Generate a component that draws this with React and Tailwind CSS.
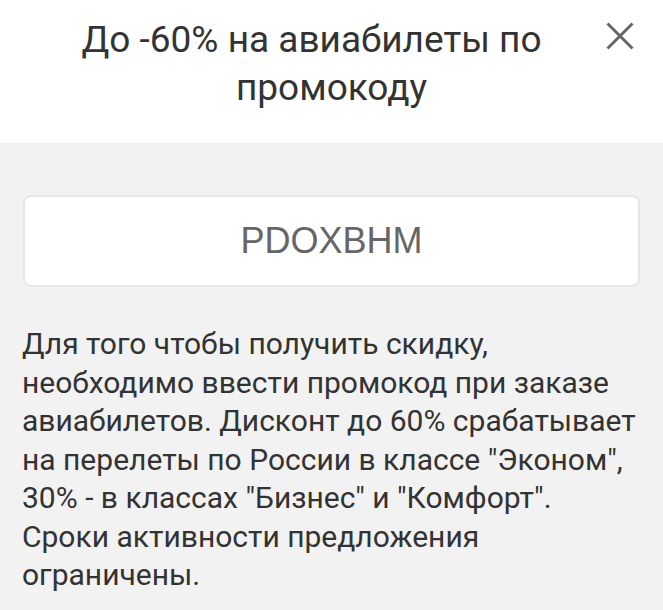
import React from 'react';

const lines = [
  'Для того чтобы получить скидку,',
  'необходимо ввести промокод при заказе',
  'авиабилетов. Дисконт до 60% срабатывает',
  'на перелеты по России в классе "Эконом",',
  '30% - в классах "Бизнес" и "Комфорт".',
  'Сроки активности предложения',
  'ограничены.',
];

const App = () => {
  return (
    <div className="w-[663px] h-[610px] overflow-hidden bg-[#f2f2f2] text-[#333]" style={{ fontFamily: 'Roboto, sans-serif' }}>
      <div className="relative bg-white h-[143px] pt-[16px]">
        <h1 className="text-center text-[37px] leading-[48px] font-normal">
          <span className="block pr-[40px]">До -60% на авиабилеты по</span>
          <span className="block">промокоду</span>
        </h1>
        <button className="absolute left-[606px] top-[22px] w-[28px] h-[28px] text-[#666]">
          <svg viewBox="0 0 28 28" className="w-[28px] h-[28px]" fill="none" stroke="currentColor" strokeWidth="3">
            <path d="M1.5 1.5 L26.5 26.5 M26.5 1.5 L1.5 26.5" />
          </svg>
        </button>
      </div>
      <div className="px-[23px] pt-[52px]">
        <div className="h-[92px] bg-white border-2 border-[#e6e6e6] rounded-[8px] flex items-center justify-center">
          <span className="text-[36px] text-[#666] leading-none" style={{ fontFamily: '"Liberation Sans", Arial, sans-serif' }}>PDOXBHM</span>
        </div>
        <p className="mt-[38px] text-[30px] leading-[38.5px] -ml-[1px]">
          {lines.map((l) => (
            <span key={l} className="block whitespace-nowrap">{l}</span>
          ))}
        </p>
      </div>
    </div>
  );
};

export default App;
